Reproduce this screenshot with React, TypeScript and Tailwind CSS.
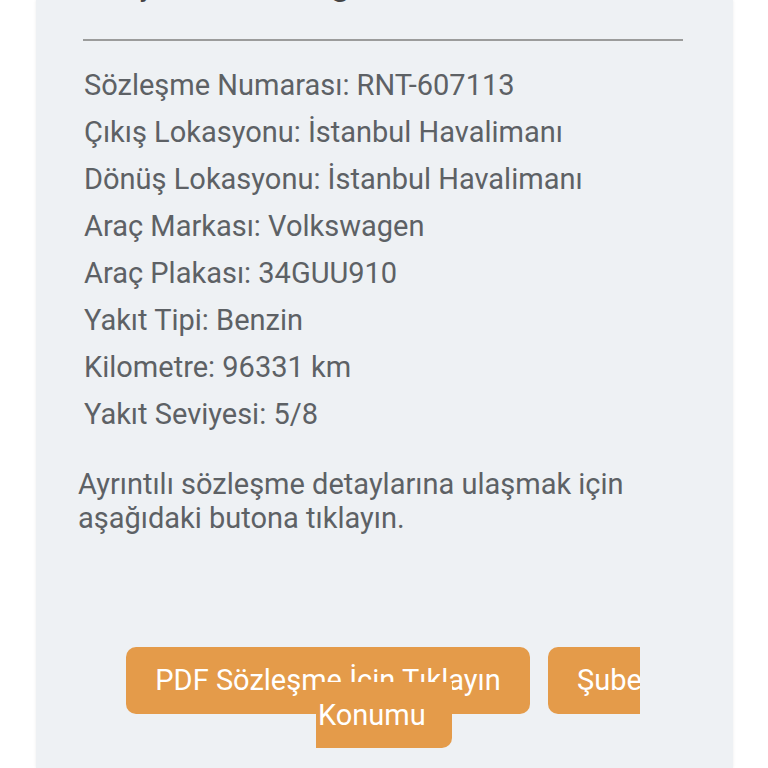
export default function App() {
  const rows = [
    "Sözleşme Numarası: RNT-607113",
    "Çıkış Lokasyonu: İstanbul Havalimanı",
    "Dönüş Lokasyonu: İstanbul Havalimanı",
    "Araç Markası: Volkswagen",
    "Araç Plakası: 34GUU910",
    "Yakıt Tipi: Benzin",
    "Kilometre: 96331 km",
    "Yakıt Seviyesi: 5/8",
  ];

  return (
    <div className="h-[768px] overflow-hidden bg-white font-['Roboto',sans-serif]">
      <div className="ml-[36px] flow-root h-[768px] w-[697px] bg-[#eef1f4] shadow-[0_0_3px_rgba(0,0,0,0.08)]">
        {/* ── Heading (scrolled off) ─────────────── */}
        <h2 className="-mt-[37px] pl-[48px] text-[32px] font-bold leading-[45px] text-[#444]">
          Araç Kiralama Bilgileri
        </h2>
        <hr className="ml-[47px] mt-[31px] w-[600px] border-0 border-t-2 border-[#9b9c9b]" />

        {/* ── Details ────────────────────────────── */}
        <ul className="mt-[21px] pl-[48px] text-[29px] leading-[47px] text-[#5d6165]">
          {rows.map((r) => (
            <li key={r}>{r}</li>
          ))}
        </ul>

        <p className="mt-[29px] pl-[42px] text-[29px] leading-[34px] text-[#5d6165]">
          Ayrıntılı sözleşme detaylarına ulaşmak için
          <br />
          aşağıdaki butona tıklayın.
        </p>

        {/* ── Buttons ────────────────────────────── */}
        <div className="relative ml-[90px] mt-[112px] w-[514px]">
          <div className="flex gap-[18px] overflow-hidden">
            <button className="h-[67px] w-[404px] shrink-0 rounded-[10px] bg-[#e49b4a] text-[29px] text-white">
              PDF Sözleşme İçin Tıklayın
            </button>
            <button className="h-[67px] w-[150px] shrink-0 rounded-[10px] bg-[#e49b4a] pl-[29px] text-left text-[29px] text-white">
              Şube
            </button>
          </div>
          <div className="absolute left-[190px] top-[35px] h-[66px] w-[136px] rounded-br-[10px] bg-[#e49b4a] pl-[2px] text-[29px] leading-[66px] text-white">
            Konumu
          </div>
        </div>
      </div>
    </div>
  );
}
